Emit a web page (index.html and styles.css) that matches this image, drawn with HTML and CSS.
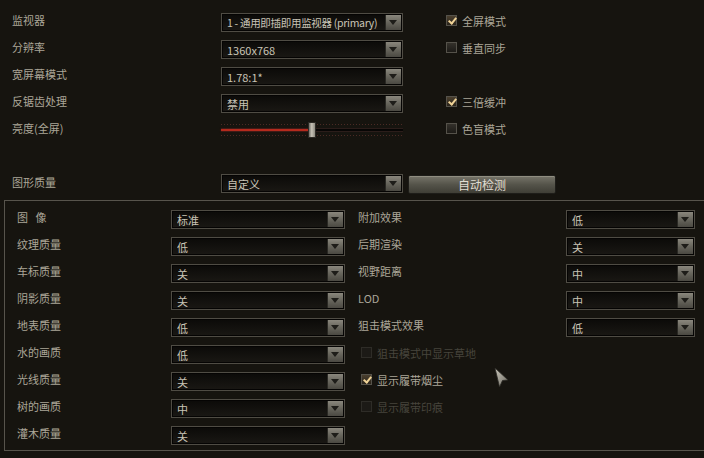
FILE: index.html
```html
<!DOCTYPE html>
<html lang="zh-CN">
<head>
    <meta charset="UTF-8">
    <title>图形设置</title>
    <link rel="stylesheet" href="styles.css">
</head>
<body>
    <div class="top">
        <div class="row">
            <span class="label">监视器</span>
            <div class="select"><span class="tight">1 - 通用即插即用监视器 (primary)</span><i class="arrow"></i></div>
            <label class="check on"><b></b>全屏模式</label>
        </div>
        <div class="row">
            <span class="label">分辨率</span>
            <div class="select"><span>1360x768</span><i class="arrow"></i></div>
            <label class="check"><b></b>垂直同步</label>
        </div>
        <div class="row">
            <span class="label">宽屏幕模式</span>
            <div class="select"><span>1.78:1*</span><i class="arrow"></i></div>
        </div>
        <div class="row">
            <span class="label">反锯齿处理</span>
            <div class="select"><span>禁用</span><i class="arrow"></i></div>
            <label class="check on"><b></b>三倍缓冲</label>
        </div>
        <div class="row">
            <span class="label">亮度(全屏)</span>
            <div class="slider">
                <div class="track"><div class="fill"></div></div>
                <div class="thumb"></div>
            </div>
            <label class="check"><b></b>色盲模式</label>
        </div>

        <div class="row quality">
            <span class="label">图形质量</span>
            <div class="select"><span>自定义</span><i class="arrow"></i></div>
            <button class="detect">自动检测</button>
        </div>
    </div>

    <div class="panel">
        <div class="col left">
            <div class="prow"><span class="label">图&nbsp;&nbsp;&nbsp;像</span><div class="select"><span>标准</span><i class="arrow"></i></div></div>
            <div class="prow"><span class="label">纹理质量</span><div class="select"><span>低</span><i class="arrow"></i></div></div>
            <div class="prow"><span class="label">车标质量</span><div class="select"><span>关</span><i class="arrow"></i></div></div>
            <div class="prow"><span class="label">阴影质量</span><div class="select"><span>关</span><i class="arrow"></i></div></div>
            <div class="prow"><span class="label">地表质量</span><div class="select"><span>低</span><i class="arrow"></i></div></div>
            <div class="prow"><span class="label">水的画质</span><div class="select"><span>低</span><i class="arrow"></i></div></div>
            <div class="prow"><span class="label">光线质量</span><div class="select"><span>关</span><i class="arrow"></i></div></div>
            <div class="prow"><span class="label">树的画质</span><div class="select"><span>中</span><i class="arrow"></i></div></div>
            <div class="prow"><span class="label">灌木质量</span><div class="select"><span>关</span><i class="arrow"></i></div></div>
        </div>
        <div class="col right">
            <div class="prow"><span class="label">附加效果</span><div class="select"><span>低</span><i class="arrow"></i></div></div>
            <div class="prow"><span class="label">后期渲染</span><div class="select"><span>关</span><i class="arrow"></i></div></div>
            <div class="prow"><span class="label">视野距离</span><div class="select"><span>中</span><i class="arrow"></i></div></div>
            <div class="prow"><span class="label">LOD</span><div class="select"><span>中</span><i class="arrow"></i></div></div>
            <div class="prow"><span class="label">狙击模式效果</span><div class="select"><span>低</span><i class="arrow"></i></div></div>
            <div class="crow"><label class="check off"><b></b>狙击模式中显示草地</label></div>
            <div class="crow"><label class="check on"><b></b>显示履带烟尘</label></div>
            <div class="crow"><label class="check off"><b></b>显示履带印痕</label></div>
        </div>
    </div>

    <!-- mouse pointer -->
    <svg class="pointer" width="16" height="22" viewBox="0 0 16 22">
        <defs>
            <linearGradient id="pg" x1="0" y1="0" x2="1" y2="1">
                <stop offset="0" stop-color="#c9c6bb"/>
                <stop offset="1" stop-color="#6d6a61"/>
            </linearGradient>
        </defs>
        <path d="M1 1 L14 13 L8.5 13.5 L5.5 20 Z" fill="url(#pg)" stroke="#2b2a25" stroke-width="0.8"/>
    </svg>
</body>
</html>
```

FILE: styles.css
```css
* {
    box-sizing: border-box;
}

body {
    margin: 0;
    width: 704px;
    height: 458px;
    overflow: hidden;
    position: relative;
    background: #16140f;
    color: #aba698;
    font-family: "Noto Sans CJK SC", "Noto Sans", sans-serif;
    font-size: 11px;
}

.top {
    padding: 7px 0 0 12px;
}

.row {
    display: grid;
    grid-template-columns: 209px 182px auto;
    height: 27px;
    align-items: center;
}

.row .check {
    margin-left: 43px;
}

.label {
    white-space: nowrap;
    margin-top: -1px;
}

/* dropdown */
.select {
    height: 19px;
    margin-top: 4px;
    display: flex;
    align-items: center;
    padding: 1px 1px 1px 5px;
    border: 1px solid #4f4c44;
    background: linear-gradient(#0b0a08, #1a1814);
    box-shadow: inset 0 0 0 1px #050403;
    color: #c9c4b6;
}

.select span {
    flex: 1;
    white-space: nowrap;
    overflow: hidden;
}

.select .tight {
    letter-spacing: -0.3px;
    font-size: 10.5px;
}

.arrow {
    width: 16px;
    height: 100%;
    display: flex;
    align-items: center;
    justify-content: center;
    background: linear-gradient(#8a877d, #67655c 50%, #4b4942);
    box-shadow: inset 1px 0 0 #2a2924;
}

.arrow::after {
    content: "";
    border-left: 4px solid transparent;
    border-right: 4px solid transparent;
    border-top: 5px solid #1e1d19;
}

/* checkbox */
.check {
    display: flex;
    align-items: center;
    gap: 5px;
    white-space: nowrap;
}

.check b {
    width: 11px;
    height: 11px;
    border: 1px solid #55524a;
    background: linear-gradient(#34312b, #1d1b17);
    position: relative;
}

.check.on b {
    background: linear-gradient(#4a3f2e, #2a241b);
}

.check.on b::after {
    content: "";
    position: absolute;
    left: 3px;
    top: 0;
    width: 3px;
    height: 6px;
    border-right: 2px solid #f0d397;
    border-bottom: 2px solid #f0d397;
    transform: rotate(40deg);
}

.check.off {
    color: #47443c;
}

.check.off b {
    border-color: #2e2c27;
    background: #1c1a16;
}

/* brightness slider */
.slider {
    width: 182px;
    height: 16px;
    margin-top: 3px;
    position: relative;
    background:
        repeating-linear-gradient(90deg, #4a2a24 0 1px, transparent 1px 3px) 0 2px / 100% 1px no-repeat,
        repeating-linear-gradient(90deg, #4a2a24 0 1px, transparent 1px 3px) 0 13px / 100% 1px no-repeat;
}

.track {
    position: absolute;
    left: 0;
    right: 0;
    top: 6px;
    height: 4px;
    background: #070605;
    border-top: 1px solid #2b1d1a;
    border-bottom: 1px solid #2b1d1a;
}

.fill {
    width: 87px;
    height: 100%;
    background: #b52a1d;
    box-shadow: 0 0 2px #7a1a12;
}

.thumb {
    position: absolute;
    left: 87px;
    top: 0;
    width: 8px;
    height: 16px;
    border: 1px solid #2c2a25;
    background: linear-gradient(90deg, #6f6c64, #c6c2b6 45%, #8d8a80);
}

/* quality row */
.row.quality {
    grid-template-columns: 209px 182px 153px;
    margin-top: 27px;
}

.quality .select {
    margin-top: 2px;
}

.detect {
    height: 19px;
    margin: 3px 0 0 5px;
    border: 1px solid #1e1d19;
    border-radius: 2px;
    background: linear-gradient(#77756a, #55544a 50%, #3f3e36);
    box-shadow: inset 0 1px 0 #908e81;
    color: #e0ddd2;
    font-family: inherit;
    font-size: 12px;
    padding: 0;
}

/* quality panel */
.panel {
    display: flex;
    margin: 4px -10px 0 4px;
    padding: 3px 0 3px 12px;
    border: 1px solid #57544c;
}

.col.left {
    width: 328px;
}

.col.right {
    margin-left: 13px;
}

.prow {
    display: grid;
    height: 27px;
    align-items: center;
}

.left .prow {
    grid-template-columns: 154px 174px;
}

.right .prow {
    grid-template-columns: 208px 129px;
}

.crow {
    height: 27px;
    display: flex;
    align-items: center;
    padding-left: 3px;
}

.pointer {
    position: absolute;
    left: 494px;
    top: 367px;
}
```
